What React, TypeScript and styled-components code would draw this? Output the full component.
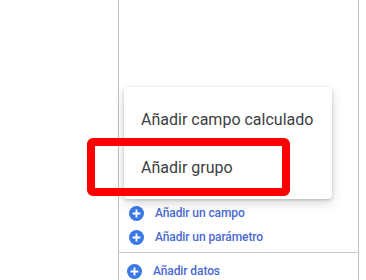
import React from "react";
import styled, { createGlobalStyle } from "styled-components";

const Global = createGlobalStyle`
  html, body { margin: 0; padding: 0; background: #fff; overflow: hidden; }
  body { width: 366px; height: 280px; font-family: Roboto, "Liberation Sans", sans-serif; }
  #root { width: 366px; height: 280px; }
`;

const Page = styled.div`
  position: relative;
  width: 366px;
  height: 280px;
  display: flex;
  overflow: hidden;
`;

const Gutter = styled.div`
  width: 118px;
  flex: none;
`;

const Panel = styled.div`
  width: 239px;
  flex: none;
  height: 280px;
  border-left: 1px solid #c4c4c4;
  border-right: 1px solid #c4c4c4;
  display: flex;
  flex-direction: column;
`;

const Spacer = styled.div`
  height: 201px;
  flex: none;
`;

const Section = styled.div<{ $divider?: boolean; $top?: number }>`
  display: flex;
  flex-direction: column;
  padding-top: ${(p) => p.$top ?? 0}px;
  padding-bottom: ${(p) => (p.$divider ? 3 : 0)}px;
  border-bottom: ${(p) => (p.$divider ? "1px solid #c8c8c8" : "none")};
`;

const Row = styled.div<{ $indent: number }>`
  height: 24px;
  display: flex;
  align-items: center;
  padding-left: ${(p) => p.$indent}px;
  gap: ${(p) => (p.$indent > 9 ? 11 : 11)}px;
  font-size: 12px;
  font-weight: 500;
  letter-spacing: -0.1px;
  color: #4a6ad2;
  white-space: nowrap;
`;

const Menu = styled.div`
  position: absolute;
  left: 124px;
  top: 87px;
  width: 208px;
  padding: 8px 0;
  background: #fff;
  border-radius: 4px;
  box-shadow: 0 1px 3px rgba(0, 0, 0, 0.18), 0 4px 12px rgba(0, 0, 0, 0.16);
`;

const MenuItem = styled.div`
  height: 48px;
  display: flex;
  align-items: center;
  padding-left: 17px;
  font-size: 16px;
  color: #3c4043;
  white-space: nowrap;
`;

const Highlight = styled.div`
  position: absolute;
  left: 87px;
  top: 138px;
  width: 187px;
  height: 42px;
  border: 8px solid #ff0000;
  border-radius: 6px;
`;

const PlusIcon = () => (
  <svg width="15" height="15" viewBox="0 0 16 16">
    <circle cx="8" cy="8" r="8" fill="#3a78e6" />
    <path d="M8 3.8v8.4M3.8 8h8.4" stroke="#fff" strokeWidth="2" />
  </svg>
);

export default function App() {
  return (
    <>
      <Global />
      <Page>
        <Gutter />
        <Panel>
          <Spacer />
          <Section $divider>
            <Row $indent={10}>
              <PlusIcon />
              <span>Añadir un campo</span>
            </Row>
            <Row $indent={10}>
              <PlusIcon />
              <span>Añadir un parámetro</span>
            </Row>
          </Section>
          <Section $top={6}>
            <Row $indent={8}>
              <PlusIcon />
              <span>Añadir datos</span>
            </Row>
          </Section>
        </Panel>
        <Menu>
          <MenuItem>Añadir campo calculado</MenuItem>
          <MenuItem>Añadir grupo</MenuItem>
        </Menu>
        <Highlight />
      </Page>
    </>
  );
}
